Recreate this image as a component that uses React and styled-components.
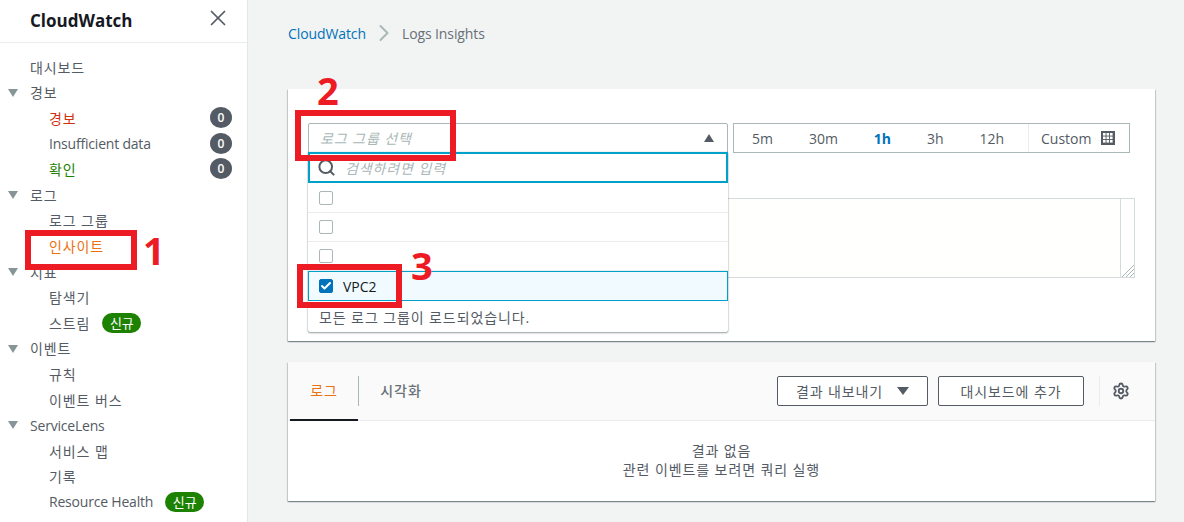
import React from 'react';
import styled, { createGlobalStyle } from 'styled-components';
import { X, ChevronRight, Search, Settings, Check } from 'lucide-react';

const FONT = `"Open Sans", "Noto Sans CJK KR", sans-serif`;

const GlobalStyle = createGlobalStyle`
  html, body {
    margin: 0;
    padding: 0;
    background: #f2f3f3;
  }
  * {
    box-sizing: border-box;
  }
`;

const NAV = [
  { label: '대시보드', level: 0 },
  { label: '경보', level: 0, open: true },
  { label: '경보', level: 1, tone: '#d13212', count: 0 },
  { label: 'Insufficient data', level: 1, count: 0 },
  { label: '확인', level: 1, tone: '#1d8102', count: 0 },
  { label: '로그', level: 0, open: true },
  { label: '로그 그룹', level: 1 },
  { label: '인사이트', level: 1, tone: '#ec7211' },
  { label: '지표', level: 0, open: true },
  { label: '탐색기', level: 1 },
  { label: '스트림', level: 1, isNew: true },
  { label: '이벤트', level: 0, open: true },
  { label: '규칙', level: 1 },
  { label: '이벤트 버스', level: 1 },
  { label: 'ServiceLens', level: 0, open: true },
  { label: '서비스 맵', level: 1 },
  { label: '기록', level: 1 },
  { label: 'Resource Health', level: 1, isNew: true },
];

const RANGES = ['5m', '30m', '1h', '3h', '12h'];

const App = () => {
  return (
    <Page>
      <GlobalStyle />
      <Sidebar>
        <SideHeader>
          <SideTitle>CloudWatch</SideTitle>
          <CloseIcon size={26} strokeWidth={1.6} />
        </SideHeader>
        <NavList>
          {NAV.map((item, i) => (
            <NavRow
              key={i}
              $level={item.level}
              $tone={item.tone}
              $latin={/^[A-Za-z]/.test(item.label)}
            >
              {item.open && <Caret />}
              {item.label}
              {item.isNew && <NewBadge>신규</NewBadge>}
              {item.count !== undefined && <Count>{item.count}</Count>}
            </NavRow>
          ))}
        </NavList>
      </Sidebar>

      <Main>
        <Breadcrumb>
          <CrumbLink>CloudWatch</CrumbLink>
          <ChevronRight size={28} strokeWidth={1.7} color="#aab7b8" />
          <CrumbCurrent>Logs Insights</CrumbCurrent>
        </Breadcrumb>

        <QueryPanel>
          <TopRow>
            <SelectWrap>
              <SelectBox>
                <Placeholder>로그 그룹 선택</Placeholder>
                <UpCaret />
              </SelectBox>
              <Dropdown>
                <SearchField>
                  <Search size={19} strokeWidth={2.5} color="#545b64" />
                  <Placeholder>검색하려면 입력</Placeholder>
                </SearchField>
                <OptionRow><Box /></OptionRow>
                <OptionRow><Box /></OptionRow>
                <OptionRow><Box /></OptionRow>
                <SelectedRow>
                  <Box $checked>
                    <Check size={12} strokeWidth={4} color="#fff" />
                  </Box>
                  VPC2
                </SelectedRow>
                <LoadedNote>모든 로그 그룹이 로드되었습니다.</LoadedNote>
              </Dropdown>
            </SelectWrap>
            <TimeRange>
              <Presets>
                {RANGES.map(r => (
                  <Preset key={r} $active={r === '1h'}>{r}</Preset>
                ))}
              </Presets>
              <CustomRange>
                Custom
                <CalendarIcon />
              </CustomRange>
            </TimeRange>
          </TopRow>
          <QueryBox>
            <Scrollbar />
            <Grip viewBox="0 0 12 12">
              <path d="M0 12 L12 0 M4 12 L12 4 M8 12 L12 8" stroke="#aab7b8" strokeWidth="1" />
            </Grip>
          </QueryBox>
        </QueryPanel>

        <ResultPanel>
          <ResultHeader>
            <Tab $active>로그</Tab>
            <TabDivider />
            <Tab>시각화</Tab>
            <HeaderActions>
              <OutlineButton $wide>
                결과 내보내기
                <DownCaret />
              </OutlineButton>
              <OutlineButton>대시보드에 추가</OutlineButton>
              <ActionDivider />
              <Settings size={18} strokeWidth={2.4} color="#545b64" />
            </HeaderActions>
          </ResultHeader>
          <ResultBody>
            <div>결과 없음</div>
            <div>관련 이벤트를 보려면 쿼리 실행</div>
          </ResultBody>
        </ResultPanel>
      </Main>

      <Marker $x={25} $y={230} $w={112} $h={40} $t={6} />
      <Marker $x={295} $y={110} $w={161} $h={51} $t={6} />
      <Marker $x={297} $y={264} $w={105} $h={44} $t={6} />
      <Digit $x={143} $y={224}>1</Digit>
      <Digit $x={317} $y={64}>2</Digit>
      <Digit $x={411} $y={239}>3</Digit>
    </Page>
  );
};

const CalendarIcon = () => (
  <CalendarSvg viewBox="0 0 14 14">
    <rect width="14" height="14" fill="#545b64" />
    {[2, 5.5, 9].map(x =>
      [2, 5.5, 9].map(y => (
        <rect key={`${x}-${y}`} x={x} y={y} width="2.6" height="2.6" fill="#fff" />
      ))
    )}
  </CalendarSvg>
);

const Page = styled.div`
  position: relative;
  display: flex;
  width: 1184px;
  height: 522px;
  overflow: hidden;
  background: #f2f3f3;
  font-family: ${FONT};
  font-size: 14px;
  letter-spacing: 0.9px;
  color: #545b64;
`;

const Sidebar = styled.aside`
  flex: none;
  width: 248px;
  height: 100%;
  background: #fff;
  border-right: 1px solid #e4e7e7;
`;

const SideHeader = styled.div`
  display: flex;
  align-items: center;
  justify-content: space-between;
  height: 43px;
  padding: 0 16px 2px 30px;
  border-bottom: 1px solid #eaeded;
`;

const SideTitle = styled.div`
  font-size: 17px;
  font-weight: 700;
  letter-spacing: 0;
  color: #16191f;
`;

const CloseIcon = styled(X)`
  color: #545b64;
  margin-top: -5px;
`;

const NavList = styled.div`
  padding-top: 11px;
`;

const NavRow = styled.div`
  position: relative;
  display: flex;
  align-items: center;
  height: 25.6px;
  padding-left: ${p => (p.$level === 1 ? 49 : 30)}px;
  letter-spacing: ${p => (p.$latin ? '-0.2px' : '0.9px')};
  color: ${p => p.$tone || '#545b64'};
`;

const Caret = styled.span`
  position: absolute;
  left: 8px;
  top: 9px;
  border-left: 5px solid transparent;
  border-right: 5px solid transparent;
  border-top: 8px solid #879596;
`;

const Count = styled.span`
  position: absolute;
  left: 210px;
  top: 2px;
  display: flex;
  align-items: center;
  justify-content: center;
  width: 22px;
  height: 21px;
  border-radius: 50%;
  background: #545b64;
  color: #fff;
  font-size: 12px;
  font-weight: 600;
  letter-spacing: 0;
`;

const NewBadge = styled.span`
  display: inline-flex;
  align-items: center;
  justify-content: center;
  width: 39px;
  height: 20px;
  margin-left: 12px;
  border-radius: 10px;
  background: #1d8102;
  color: #fff;
  font-size: 13px;
  letter-spacing: 0;
`;

const Main = styled.main`
  flex: 1;
  min-width: 0;
  padding: 0 29px 0 40px;
`;

const Breadcrumb = styled.nav`
  display: flex;
  align-items: center;
  gap: 4px;
  height: 66px;
  margin-bottom: 23px;
  letter-spacing: -0.1px;
`;

const CrumbLink = styled.span`
  color: #0073bb;
`;

const CrumbCurrent = styled.span`
  color: #687078;
`;

const Panel = styled.section`
  background: #fff;
  box-shadow: 0 1px 1px 0 rgba(0, 28, 36, 0.3), 1px 1px 1px 0 rgba(0, 28, 36, 0.15),
    -1px 1px 1px 0 rgba(0, 28, 36, 0.15);
`;

const QueryPanel = styled(Panel)`
  height: 252px;
  padding: 34px 20px 0;
`;

const TopRow = styled.div`
  display: flex;
  gap: 5px;
`;

const SelectWrap = styled.div`
  position: relative;
  width: 420px;
`;

const SelectBox = styled.div`
  display: flex;
  align-items: center;
  justify-content: space-between;
  height: 30px;
  padding: 0 13px 0 11px;
  border: 1px solid #aab7b8;
  border-radius: 2px 2px 0 0;
`;

const Placeholder = styled.span`
  font-style: italic;
  color: #aab7b8;
`;

const UpCaret = styled.span`
  border-left: 5.5px solid transparent;
  border-right: 5.5px solid transparent;
  border-bottom: 8px solid #545b64;
`;

const Dropdown = styled.div`
  position: absolute;
  z-index: 2;
  top: 29px;
  left: 0;
  width: 100%;
  background: #fff;
  border-radius: 0 0 2px 2px;
  box-shadow: 0 1px 2px 0 rgba(0, 28, 36, 0.4), 0 0 1px 0 rgba(0, 28, 36, 0.4);
`;

const SearchField = styled.div`
  display: flex;
  align-items: center;
  gap: 9px;
  height: 31px;
  margin-bottom: 1px;
  padding: 0 7px;
  border: 2px solid #00a1c9;
`;

const OptionRow = styled.div`
  display: flex;
  align-items: center;
  height: 29px;
  padding-left: 11px;
  border-bottom: 1px solid #eaeded;
`;

const SelectedRow = styled.div`
  display: flex;
  align-items: center;
  gap: 10px;
  height: 30px;
  padding-left: 10px;
  border: 1px solid #00a1c9;
  background: #f1faff;
  letter-spacing: 0;
  color: #16191f;
`;

const Box = styled.span`
  display: flex;
  align-items: center;
  justify-content: center;
  width: 14px;
  height: 14px;
  border-radius: 2px;
  border: 1px solid ${p => (p.$checked ? '#0073bb' : '#aab7b8')};
  background: ${p => (p.$checked ? '#0073bb' : '#fff')};
`;

const LoadedNote = styled.div`
  display: flex;
  align-items: center;
  height: 31px;
  padding-left: 11px;
`;

const TimeRange = styled.div`
  display: flex;
  height: 30px;
  width: 397px;
  border: 1px solid #aab7b8;
  letter-spacing: 0;
`;

const Presets = styled.div`
  display: flex;
  align-items: center;
  justify-content: space-between;
  width: 295px;
  padding: 0 24px 0 18px;
  border-right: 1px solid #eaeded;
`;

const Preset = styled.span`
  font-weight: ${p => (p.$active ? 700 : 400)};
  color: ${p => (p.$active ? '#0073bb' : '#545b64')};
`;

const CustomRange = styled.div`
  display: flex;
  align-items: center;
  gap: 10px;
  padding-left: 12px;
`;

const CalendarSvg = styled.svg`
  width: 14px;
  height: 14px;
`;

const QueryBox = styled.div`
  position: relative;
  height: 80px;
  margin-top: 45px;
  border: 1px solid #d5dbdb;
  background: #fffffd;
`;

const Scrollbar = styled.div`
  position: absolute;
  top: 0;
  right: 0;
  bottom: 0;
  width: 14px;
  background: #fff;
  border-left: 1px solid #d5dbdb;
`;

const Grip = styled.svg`
  position: absolute;
  right: 0;
  bottom: 0;
  width: 12px;
  height: 12px;
`;

const ResultPanel = styled(Panel)`
  height: 139px;
  margin-top: 21px;
`;

const ResultHeader = styled.div`
  display: flex;
  align-items: center;
  height: 59px;
  padding-left: 2px;
  background: #fafafa;
  border-bottom: 1px solid #eaeded;
`;

const Tab = styled.div`
  display: flex;
  align-items: center;
  justify-content: center;
  width: 68px;
  height: 59px;
  padding-bottom: 2px;
  font-weight: ${p => (p.$active ? 400 : 500)};
  color: ${p => (p.$active ? '#ec7211' : '#687078')};
  border-bottom: 2px solid ${p => (p.$active ? '#16191f' : 'transparent')};
  margin-bottom: -1px;
`;

const TabDivider = styled.span`
  width: 1px;
  height: 30px;
  margin-right: 8px;
  background: #aab7b8;
`;

const HeaderActions = styled.div`
  display: flex;
  align-items: center;
  margin-left: auto;
  padding-right: 25px;
`;

const OutlineButton = styled.div`
  display: flex;
  align-items: center;
  justify-content: center;
  gap: 14px;
  width: ${p => (p.$wide ? 151 : 146)}px;
  height: 30px;
  margin-right: ${p => (p.$wide ? 10 : 0)}px;
  border: 1px solid #545b64;
  border-radius: 2px;
  background: #fff;
`;

const DownCaret = styled.span`
  border-left: 6px solid transparent;
  border-right: 6px solid transparent;
  border-top: 8px solid #545b64;
`;

const ActionDivider = styled.span`
  width: 1px;
  height: 30px;
  margin: 0 12px 0 15px;
  background: #eaeded;
`;

const ResultBody = styled.div`
  padding-top: 20px;
  text-align: center;
  line-height: 19px;
`;

const Marker = styled.div`
  position: absolute;
  z-index: 5;
  left: ${p => p.$x}px;
  top: ${p => p.$y}px;
  width: ${p => p.$w}px;
  height: ${p => p.$h}px;
  border: ${p => p.$t}px solid #ed1c24;
`;

const Digit = styled.div`
  position: absolute;
  z-index: 5;
  left: ${p => p.$x}px;
  top: ${p => p.$y}px;
  font-size: 38px;
  font-weight: 700;
  line-height: 52px;
  letter-spacing: 0;
  color: #ed1c24;
`;

export default App;
